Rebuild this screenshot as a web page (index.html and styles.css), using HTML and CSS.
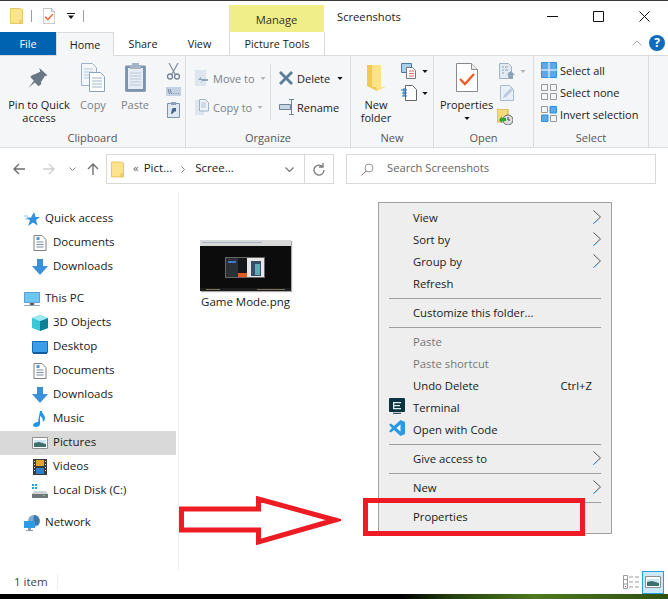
FILE: index.html
```html
<!DOCTYPE html>
<html lang="en">
<head>
<meta charset="utf-8">
<title>Screenshots</title>
<link rel="stylesheet" href="styles.css">
</head>
<body>
<svg class="defs" width="0" height="0">
  <defs>
    <symbol id="folder" viewBox="0 0 14 17"><path d="M.5.5h10l3 1v15H.5z" fill="#fde48c" stroke="#e3c35f"/><path d="M10.5 13h3v3.500h-3z" fill="#f3cf6a" stroke="#e3c35f" stroke-width=".6"/></symbol>
    <symbol id="propdoc" viewBox="0 0 22 29"><path d="M.5.500h15l6 6v22H.5z" fill="#fff" stroke="#8a8a8a"/><path d="M15.500.5v6h6" fill="#eee" stroke="#8a8a8a"/><path d="M4 16l5 5 9-10" fill="none" stroke="#ef5a24" stroke-width="2.400"/></symbol>
    <symbol id="docs" viewBox="0 0 13 16"><path d="M.5.500h8l4 4v11H.5z" fill="#fff" stroke="#7f7f7f"/><path d="M3 7h7M3 9.500h7M3 12h7" stroke="#6f8ba6"/><path d="M3 2h3v3H3z" fill="#5d93c5"/></symbol>
    <symbol id="down" viewBox="0 0 16 16"><path d="M5 0h6v7h5l-8 9-8-9h5z" fill="#3c8fdc"/></symbol>
    <symbol id="chev" viewBox="0 0 8 14"><path d="M.5.500L7.500 7 .5 13.500" fill="none" stroke="#555" stroke-width="1"/><path d="M4 10.300L.5 13.500" fill="none" stroke="#2f8fe0" stroke-width="1"/></symbol>
    <symbol id="tri" viewBox="0 0 7 4"><path d="M0 0h7L3.500 4z"/></symbol>
    <symbol id="pic" viewBox="0 0 16 12"><path d="M.5.5h15v11H.5z" fill="#fff" stroke="#8f8f8f"/><path d="M2 3h12v3H2z" fill="#cfe6f3"/><path d="M2 6l5-1 7 2v3H2z" fill="#3e6d6d"/></symbol>
  </defs>
</svg>
<div class="window">
  <div class="topstrip"></div>
  <header class="titlebar">
    <div class="qat">
      <svg class="i-qfolder"><use href="#folder"/></svg>
      <span class="qsep"></span>
      <svg class="i-qdoc"><use href="#propdoc"/></svg>
      <svg class="i-qdrop" viewBox="0 0 8 6"><path d="M0 0h8v1H0zM1 2.500h6L4 6z" fill="#111"/></svg>
      <span class="qsep"></span>
    </div>
    <div class="manage">Manage</div>
    <div class="wintitle">Screenshots</div>
    <div class="winctl">
      <svg class="wc" viewBox="0 0 11 11"><path d="M0 5.500h11" stroke="#111"/></svg>
      <svg class="wc" viewBox="0 0 11 11"><path d="M.5.500h10v10H.5z" fill="none" stroke="#111"/></svg>
      <svg class="wc" viewBox="0 0 11 11"><path d="M.5.500l10 10M10.500.5l-10 10" stroke="#111"/></svg>
    </div>
  </header>
  <nav class="tabs">
    <div class="tab tab-file">File</div>
    <div class="tab tab-home">Home</div>
    <div class="tab tab-share">Share</div>
    <div class="tab tab-view">View</div>
    <div class="tab tab-tools">Picture Tools</div>
    <div class="tabs-right">
      <svg class="collapse" viewBox="0 0 10 6"><path d="M.5 5.500L5 1l4.500 4.500" fill="none" stroke="#aaa"/></svg>
      <div class="help">?</div>
    </div>
  </nav>
  <section class="ribbon">
    <div class="group g-clip">
      <div class="gbody">
        <div class="rbtn b-pin">
          <div class="ricon"><svg class="i-pin" viewBox="0 0 22 22"><path d="M13 0l9 8-3 1-4 6 0 3-3 2-4-4-7 6 6-8-4-4 2-2 3-1 6-3z" fill="#6a7885"/></svg></div>
          <span>Pin to Quick<br>access</span>
        </div>
        <div class="rbtn b-copy dim">
          <div class="ricon"><svg class="i-copy" viewBox="0 0 24 29"><path d="M.5.500h11l4 4v18H.5z" fill="#f4f7fa" stroke="#9fb2c5"/><path d="M3 6h9M3 9h9M3 12h9M3 15h9" stroke="#b8c8d8"/><path d="M8.500 9.500h11l4 4v15h-15z" fill="#fff" stroke="#8ba4bc"/><path d="M11 15h10M11 18h10M11 21h10M11 24h10" stroke="#9db4ca"/></svg></div>
          <span>Copy</span>
        </div>
        <div class="rbtn b-paste dim">
          <div class="ricon"><svg class="i-paste" viewBox="0 0 21 29"><path d="M.7 3h19.600v25.300H.7z" fill="#7c93ad" stroke="#7c93ad"/><path d="M3 5h15v21H3z" fill="#e6ecf3"/><path d="M5 10h11M5 13h11M5 16h11M5 19h11M5 22h11" stroke="#b9c9db"/><path d="M7 0h7v2h2v4H5V2h2z" fill="#a5b4c4"/></svg></div>
          <span>Paste</span>
        </div>
        <div class="rsmallcol">
          <svg class="i-cut" viewBox="0 0 13 17"><path d="M2 0l6 11M11 0L5 11" stroke="#8695a4" stroke-width="1.300"/><circle cx="3" cy="13.500" r="2.500" fill="none" stroke="#6d8299" stroke-width="1.300"/><circle cx="10" cy="13.500" r="2.500" fill="none" stroke="#6d8299" stroke-width="1.300"/></svg>
          <svg class="i-path" viewBox="0 0 15 9"><path d="M0 0h15v9H0z" fill="#c4d3e4"/><path d="M2 2l1.500 5M4 2l1.500 5M7 6.500h1M9.500 6.500h1M12 6.500h1" stroke="#567" stroke-width=".7"/></svg>
          <svg class="i-shortcut" viewBox="0 0 13 16"><path d="M.5 1.500h12v14H.5z" fill="#dfe7f0" stroke="#7c93ad"/><path d="M4 0h5v3H4z" fill="#8ea2b7"/><path d="M4 12l1-5h1l-1-1h4v4L8 9l-3 3z" fill="#46678a"/></svg>
        </div>
      </div>
      <div class="glabel">Clipboard</div>
    </div>
    <div class="group g-org">
      <div class="gbody">
        <div class="orgcol oc-a">
          <div class="orow dim"><svg class="i-small" viewBox="0 0 14 16"><path d="M0 0h11v16H0z" fill="#dde6ef"/><path d="M7 10l-4 0 3-3v2h7v2H6v2z" fill="#8ca3b9"/></svg><span>Move to</span><svg class="i-tri dimtri"><use href="#tri"/></svg></div>
          <div class="orow dim"><svg class="i-small" viewBox="0 0 14 16"><path d="M0 1h9v15H0z" fill="#dde6ef"/><path d="M4.500.5h6l3 3V12h-9z" fill="#eef2f6" stroke="#9fb2c5"/><path d="M6 4h5M6 6h5M6 8h5" stroke="#b1c2d3"/></svg><span>Copy to</span><svg class="i-tri dimtri"><use href="#tri"/></svg></div>
        </div>
        <div class="orgcol oc-b">
          <div class="orow"><svg class="i-del" viewBox="0 0 14 14"><path d="M2 0l5 5 5-5 2 2-5 5 5 5-2 2-5-5-5 5-2-2 5-5-5-5z" fill="#5c7c9b"/></svg><span>Delete</span><svg class="i-tri"><use href="#tri"/></svg></div>
          <div class="orow"><svg class="i-ren" viewBox="0 0 16 16"><path d="M.5 5.500h11v5H.5z" fill="#c8d5e3" stroke="#6d8299"/><path d="M10 .5h5M10 15.500h5M12.500.5v15" stroke="#6d8299"/></svg><span>Rename</span></div>
        </div>
      </div>
      <div class="glabel">Organize</div>
    </div>
    <div class="group g-new">
      <div class="gbody">
        <div class="rbtn b-newf">
          <div class="ricon"><svg class="i-newf" viewBox="0 0 19 28"><path d="M0 1h10v26L0 22z" fill="#f3c952"/><path d="M5 1h9v22h5l-9 4-1-4H5z" fill="#fde18b"/></svg></div>
          <span>New<br>folder</span>
        </div>
        <div class="newcol">
          <div class="nrow"><svg class="i-sm2" viewBox="0 0 16 16"><path d="M.5.5h10v9H.5z" fill="#a8d0ea" stroke="#4c7ca3"/><path d="M5.500 4.500h6l3 3v8h-9z" fill="#fff" stroke="#777"/><path d="M8 8h5M8 10.500h5M8 13h5" stroke="#d86060"/></svg><svg class="i-tri"><use href="#tri"/></svg></div>
          <div class="nrow"><svg class="i-sm2" viewBox="0 0 16 16"><path d="M4.500.5h7l4 4v11h-11z" fill="#fff" stroke="#666"/><path d="M0 5h6M1 8h5M1 11h5M3 3v8" stroke="#1d6fc0"/></svg><svg class="i-tri"><use href="#tri"/></svg></div>
        </div>
      </div>
      <div class="glabel">New</div>
    </div>
    <div class="group g-open">
      <div class="gbody">
        <div class="rbtn b-prop">
          <div class="ricon"><svg class="i-prop"><use href="#propdoc"/></svg></div>
          <span>Properties</span>
          <svg class="i-tri tri-under"><use href="#tri"/></svg>
        </div>
        <div class="opencol">
          <div class="nrow"><svg class="i-sm2" viewBox="0 0 16 16"><path d="M.5.5h9l3 3v6h-3v6h-9z" fill="#e2eaf2" stroke="#9fb2c5"/><path d="M3 4h2M6 4h3M3 7h2M6 7h3M3 10h2" stroke="#8ca3b9"/><path d="M12 8l4 4h-2v4h-4v-4H8z" fill="#8ca3b9"/></svg><svg class="i-tri dimtri"><use href="#tri"/></svg></div>
          <div class="nrow"><svg class="i-sm2 tall" viewBox="0 0 14 16"><path d="M.5.500h9l4 4v11H.5z" fill="#e8eff6" stroke="#a9bbcc"/><path d="M3 13l1-3 7-7 2 2-7 7z" fill="#b8cadb"/></svg></div>
          <div class="nrow"><svg class="i-hist" viewBox="0 0 16 16"><path d="M0 0h11v13H0z" fill="#f6d978" stroke="#cfae4b"/><circle cx="11" cy="11" r="5" fill="#ddd" stroke="#666"/><path d="M11 8v3h2" stroke="#444" fill="none"/><path d="M2 11l3-4v2h4v3H5v2z" fill="#2da33a"/></svg></div>
        </div>
      </div>
      <div class="glabel">Open</div>
    </div>
    <div class="group g-sel">
      <div class="gbody selcol">
        <div class="srow"><svg class="i-sel" viewBox="0 0 16 16"><path d="M.5.500h15v15H.5z" fill="#5ea8e6" stroke="#2f8fe0"/><path d="M8 0v16M0 8h16" stroke="#fff"/></svg><span>Select all</span></div>
        <div class="srow"><svg class="i-sel" viewBox="0 0 16 16"><path d="M.5.500h6v6h-6zM9.500.5h6v6h-6zM.5 9.500h6v6h-6zM9.500 9.500h6v6h-6z" fill="none" stroke="#999"/></svg><span>Select none</span></div>
        <div class="srow"><svg class="i-sel" viewBox="0 0 16 16"><path d="M.5.500h6v6h-6z" fill="none" stroke="#999"/><path d="M9 .5h6.500V7H9z" fill="#5ea8e6" stroke="#2f8fe0"/><path d="M.5 9h6.500v6.500H.5z" fill="#5ea8e6" stroke="#2f8fe0"/><path d="M9.500 9.500h6v6h-6z" fill="none" stroke="#999"/></svg><span>Invert selection</span></div>
      </div>
      <div class="glabel">Select</div>
    </div>
  </section>
  <section class="addr">
    <svg class="nav-ico n-back" viewBox="0 0 12 12"><path d="M6 1L1 6l5 5M1 6h11" fill="none" stroke="#6e6e6e" stroke-width="1.400"/></svg>
    <svg class="nav-ico n-fwd" viewBox="0 0 12 12"><path d="M6 1l5 5-5 5M11 6H0" fill="none" stroke="#d0d0d0" stroke-width="1.400"/></svg>
    <svg class="n-more" viewBox="0 0 7 4"><path d="M.5.500l3 3 3-3" fill="none" stroke="#8a8a8a"/></svg>
    <svg class="nav-ico n-up" viewBox="0 0 12 12"><path d="M1 6l5-5 5 5M6 1v11" fill="none" stroke="#6e6e6e" stroke-width="1.400"/></svg>
    <div class="pathbox">
      <svg class="i-pfolder"><use href="#folder"/></svg>
      <span class="crumb-m">«</span><span class="crumb">Pict...</span>
      <svg class="crumb-sep" viewBox="0 0 4 7"><path d="M.5.500l3 3-3 3" fill="none" stroke="#777"/></svg>
      <span class="crumb">Scree...</span>
      <svg class="path-drop" viewBox="0 0 9 5"><path d="M.5.500l4 4 4-4" fill="none" stroke="#777" stroke-width="1.200"/></svg>
      <div class="refresh"><svg viewBox="0 0 12 13"><path d="M9.500 3.500A5 5 0 1 0 11 7M10 0v4H6" fill="none" stroke="#777" stroke-width="1.300"/></svg></div>
    </div>
    <div class="searchbox">
      <svg class="i-search" viewBox="0 0 13 13"><circle cx="8" cy="5" r="4" fill="none" stroke="#999"/><path d="M5 8l-4.500 4.500" stroke="#a06a8a"/></svg>
      <span>Search Screenshots</span>
    </div>
  </section>
  <main class="main">
    <aside class="tree">
      <div class="row top"><svg class="ti" viewBox="0 0 16 16"><path d="M10 1l1.500 5H16l-4 3 1.500 5.500L9 11.500 4 15l2-5.500-4-3h5z" fill="#2f8fe0"/><path d="M0 5h4M1 8h3" stroke="#8cc4f2"/></svg><span>Quick access</span></div>
      <div class="row sub"><svg class="ti"><use href="#docs"/></svg><span>Documents</span></div>
      <div class="row sub"><svg class="ti"><use href="#down"/></svg><span>Downloads</span></div>
      <div class="row top gap"><svg class="ti" viewBox="0 0 16 16"><path d="M.5 1.500h15v10H.5z" fill="#6ec6f5" stroke="#5a9fd0"/><path d="M6 12h4v2H6zM0 14.500h16" stroke="#9aa7b2"/></svg><span>This PC</span></div>
      <div class="row sub"><svg class="ti" viewBox="0 0 16 16"><path d="M8 0l8 3v10l-8 3-8-3V3z" fill="#37c8d8"/><path d="M8 6l8-3v10l-8 3z" fill="#0f7f97"/><path d="M8 0l8 3-8 3-8-3z" fill="#9eeaf0"/></svg><span>3D Objects</span></div>
      <div class="row sub"><svg class="ti" viewBox="0 0 16 14"><path d="M.5 1.500h15v11H.5z" fill="#3a9ee8" stroke="#1171b8"/><path d="M1 12h14v2H1z" fill="#0f5e9e"/></svg><span>Desktop</span></div>
      <div class="row sub"><svg class="ti"><use href="#docs"/></svg><span>Documents</span></div>
      <div class="row sub"><svg class="ti"><use href="#down"/></svg><span>Downloads</span></div>
      <div class="row sub"><svg class="ti" viewBox="0 0 16 16"><path d="M8 0h2c0 3 3 4 3 7 0 2-1 3-2 4 0-3-1-5-3-6v8c0 2-2 3-4 3s-3-1-3-2 2-3 5-3z" fill="#2196e8"/></svg><span>Music</span></div>
      <div class="row sub active"><svg class="ti" viewBox="0 0 16 12"><use href="#pic"/></svg><span>Pictures</span></div>
      <div class="row sub"><svg class="ti" viewBox="0 0 14 16"><path d="M0 0h14v16H0z" fill="#3a3a3a"/><path d="M3 1h8v6H3z" fill="#e4a52c"/><path d="M3 9h8v6H3z" fill="#2f80c8"/><path d="M1 2h1v1H1zM1 5h1v1H1zM1 8h1v1H1zM1 11h1v1H1zM12 2h1v1h-1zM12 5h1v1h-1zM12 8h1v1h-1zM12 11h1v1h-1z" fill="#ddd"/></svg><span>Videos</span></div>
      <div class="row sub"><svg class="ti" viewBox="0 0 16 14"><path d="M0 0h2v2H0zM3 0h2v2H3zM0 3h2v2H0zM3 3h2v2H3z" fill="#1ea1e8"/><path d="M2 7h12l2 3v4H0v-4z" fill="#cfd3d6"/><path d="M0 10h16v4H0z" fill="#70757a"/><path d="M11 11h2v1h-2z" fill="#5fdc5f"/></svg><span>Local Disk (C:)</span></div>
      <div class="row top gap"><svg class="ti" viewBox="0 0 16 16"><circle cx="10" cy="6" r="6" fill="#7da9cf"/><path d="M10 0a6 6 0 0 1 4 10H9z" fill="#3f78ab"/><path d="M0 6h11v7H0z" fill="#2b9be6"/><path d="M4 13h3v2H4zM2 15h7v1H2z" fill="#8a9aa6"/></svg><span>Network</span></div>
    </aside>
    <div class="files">
      <figure class="file">
        <svg class="thumb" viewBox="0 0 91 51"><path d="M0 0h91v51H0z" fill="#0c0c0c"/><path d="M0 0h91v6H0z" fill="#d9d9d9"/><path d="M2 2h60v1H2z" fill="#a8b4c4"/><path d="M25 17h40v21H25z" fill="#666"/><path d="M26 18h12v19H26z" fill="#2c2f36"/><path d="M28 21h8v2h-8z" fill="#3f78c8"/><path d="M38 18h9v19h-9z" fill="#15171c"/><path d="M38 33h9v4h-9z" fill="#e35a1f"/><path d="M47 18h17v19H47z" fill="#e8e8e8"/><path d="M51 21h10v15H51z" fill="#374d68"/><path d="M55 24h5v11h-5z" fill="#5faab6"/><path d="M0 48h91v3H0z" fill="#1c1c1c"/><path d="M6 49h14v1H6zM57 49h28v1H57z" fill="#7b7355"/></svg>
        <figcaption>Game Mode.png</figcaption>
      </figure>
    </div>
  </main>
  <footer class="status">
    <span class="count">1 item</span>
    <span class="st-sep"></span>
    <div class="views">
      <svg class="i-details" viewBox="0 0 16 14"><path d="M.5.500h4v13h-4z" fill="none" stroke="#999"/><path d="M.5 4.500h4M.5 9h4M6 2h4M12 2h4M6 7h4M12 7h4M6 12h4M12 12h4" stroke="#999"/><path d="M2 11h1v1H2z" fill="#d33"/></svg>
      <div class="view-on"><svg class="i-large"><use href="#pic"/></svg></div>
    </div>
  </footer>
  <div class="desk"></div>
</div>

<div class="ctx">
  <div class="mi"><span>View</span><svg class="mchev"><use href="#chev"/></svg></div>
  <div class="mi"><span>Sort by</span><svg class="mchev"><use href="#chev"/></svg></div>
  <div class="mi"><span>Group by</span><svg class="mchev"><use href="#chev"/></svg></div>
  <div class="mi"><span>Refresh</span></div>
  <div class="msep"></div>
  <div class="mi"><span>Customize this folder...</span></div>
  <div class="msep"></div>
  <div class="mi off"><span>Paste</span></div>
  <div class="mi off"><span>Paste shortcut</span></div>
  <div class="mi"><span>Undo Delete</span><kbd>Ctrl+Z</kbd></div>
  <div class="mi"><svg class="mico" viewBox="0 0 16 16"><path d="M1 0h14a1 1 0 0 1 1 1v12a1 1 0 0 1-1 1H1a1 1 0 0 1-1-1V1a1 1 0 0 1 1-1z" fill="#0c3440"/><path d="M4 4h8v1.200H5.300V7h5.700v1.200H5.300V10H12v1.200H4z" fill="#dfeff2"/><path d="M4 15.300h8" stroke="#0c3440"/></svg><span>Terminal</span></div>
  <div class="mi"><svg class="mico" viewBox="0 0 16 16"><path d="M11.500 0L16 2v12l-4.500 2L5 10l-3 2.500L0 11.300 3 8 0 4.700 2 3.500 5 6z" fill="#2a9ae4"/><path d="M11.500 4.500L7.500 8l4 3.500z" fill="#fff"/></svg><span>Open with Code</span></div>
  <div class="msep"></div>
  <div class="mi"><span>Give access to</span><svg class="mchev"><use href="#chev"/></svg></div>
  <div class="msep"></div>
  <div class="mi"><span>New</span><svg class="mchev"><use href="#chev"/></svg></div>
  <div class="msep"></div>
  <div class="mi"><span>Properties</span></div>
</div>
<svg class="arrow" viewBox="0 0 162 50"><path d="M2.500 13H79.500V3L156 24 79.500 46V34H2.500z" fill="none" stroke="#ed1c24" stroke-width="5"/></svg>
<div class="redbox"></div>
</body>
</html>
```
FILE: styles.css
```css
* { box-sizing: border-box; }
html, body { margin: 0; padding: 0; }
body {
  width: 668px;
  height: 599px;
  overflow: hidden;
  position: relative;
  background: #fff;
  font-family: "Open Sans", "Noto Sans", sans-serif;
  font-size: 11.5px;
  color: #1a1a1a;
}
svg { display: block; flex: none; }
.defs { position: absolute; }
.window { display: flex; flex-direction: column; width: 668px; height: 599px; }
.topstrip { height: 1px; background: #3b3838; }

.titlebar { display: flex; height: 31px; align-items: stretch; }
.qat { display: flex; align-items: center; width: 229px; padding: 0 0 2px 10px; }
.i-qfolder { width: 13px; height: 16px; }
.qsep { width: 1px; height: 12px; background: #a0a0a0; margin: 0 11px 0 8px; }
.i-qdoc { width: 12px; height: 16px; margin-right: 12px; }
.i-qdrop { width: 8px; height: 6px; margin-right: 8px; }
.qat .qsep:last-child { margin-left: 0; }
.manage { width: 95px; margin-top: 4px; background: #f0ee88; text-align: center; line-height: 29px; font-size: 11.2px; color: #333; }
.wintitle { margin-left: 13px; line-height: 32px; font-size: 11.2px; }
.winctl { display: flex; margin-left: auto; padding: 10px 18px 0 0; gap: 35px; }
.wc { width: 11px; height: 11px; }

.tabs { display: flex; height: 24px; align-items: stretch; border-bottom: 1px solid #dadbdc; }
.tab { text-align: center; line-height: 24px; font-size: 10.8px; }
.tab-file { width: 56px; background: #0063b1; color: #fff; }
.tab-home { width: 58px; background: #f5f6f7; border: 1px solid #dadbdc; border-bottom: 0; height: 24px; line-height: 23px; }
.tab-share { width: 58px; }
.tab-view { width: 55px; }
.tab-tools { width: 96px; margin-left: 2px; border: solid #dadbdc; border-width: 0 1px; }
.tabs-right { display: flex; align-items: center; margin-left: auto; padding: 0 3px 2px 0; gap: 7px; }
.collapse { width: 10px; height: 6px; }
.help { width: 16px; height: 16px; border-radius: 50%; background: #0f6cbd; color: #fff; font-weight: 700; font-size: 12px; line-height: 16px; text-align: center; }

.ribbon { display: flex; height: 92px; background: #f5f6f7; border-bottom: 1px solid #dadbdc; font-size: 11px; }
.group { display: flex; flex-direction: column; height: 91px; }
.gbody { flex: 1; display: flex; padding-top: 4px; min-height: 0; }
.glabel { height: 18px; line-height: 17px; text-align: center; color: #555; }
.g-clip, .g-org, .g-new, .g-open, .g-sel { border-right: 1px solid #dadbdc; }
.g-clip { width: 186px; }
.g-org { width: 165px; }
.g-new { width: 83px; }
.g-open { width: 100px; }
.g-sel { width: 115px; }
.rbtn { display: flex; flex-direction: column; align-items: center; text-align: center; line-height: 13px; }
.ricon { height: 38px; display: flex; align-items: center; justify-content: center; padding-bottom: 3px; }
.dim, .dim span { color: #7b8188; }
.b-pin { width: 78px; }
.b-pin .ricon { padding-right: 4px; }
.b-copy { width: 30px; }
.b-paste { width: 54px; }
.i-pin { width: 21px; height: 20px; }
.i-copy { width: 24px; height: 29px; }
.i-paste { width: 21px; height: 29px; }
.rsmallcol { display: flex; flex-direction: column; align-items: center; width: 23px; padding-top: 3px; }
.i-cut { width: 13px; height: 17px; }
.i-path { width: 15px; height: 9px; margin: 7px 0 6px; }
.i-shortcut { width: 13px; height: 16px; }

.g-org .gbody { padding: 8px 0 0 9px; }
.orgcol { display: flex; flex-direction: column; gap: 7px; padding-top: 3px; height: 56px; }
.oc-a { width: 76px; border-right: 1px solid #dadbdc; margin-right: 8px; }
.orow { display: flex; align-items: center; height: 22px; gap: 4px; white-space: nowrap; }
.i-small { width: 14px; height: 16px; }
.i-del { width: 14px; height: 14px; }
.i-ren { width: 16px; height: 16px; margin-right: -2px; }
.i-tri { width: 6px; height: 3px; fill: #111; }
.dimtri { fill: #b5b5b5; }
.oc-a .i-tri { margin-left: 1px; }
.oc-b .i-tri { margin-left: 3px; }

.b-newf { width: 50px; }
.i-newf { width: 19px; height: 28px; }
.newcol { display: flex; flex-direction: column; gap: 6px; padding-top: 3px; }
.nrow { display: flex; align-items: center; height: 16px; gap: 5px; }
.i-sm2 { width: 16px; height: 16px; }
.b-prop { width: 65px; }
.i-prop { width: 22px; height: 29px; }
.tri-under { margin-top: 6px; }
.opencol { display: flex; flex-direction: column; padding-top: 3px; gap: 6px; }
.opencol .nrow:last-child { margin-top: 2px; }
.i-hist { width: 16px; height: 16px; margin-left: -2px; }
.g-sel .selcol { flex-direction: column; padding: 6px 0 0 7px; gap: 6px; }
.srow { display: flex; align-items: center; height: 16px; gap: 3px; white-space: nowrap; }
.i-sel { width: 16px; height: 16px; }

.addr { display: flex; align-items: flex-start; height: 43px; padding: 6px 0 0 0; }
.nav-ico { width: 12px; height: 12px; margin-top: 9px; }
.n-back { margin-left: 13px; }
.n-fwd { margin-left: 18px; }
.n-more { width: 7px; height: 4px; margin: 13px 0 0 14px; }
.n-up { margin-left: 11px; }
.pathbox { display: flex; align-items: center; width: 228px; height: 30px; margin-left: 7px; border: 1px solid #d9d9d9; padding-left: 4px; }
.i-pfolder { width: 13px; height: 17px; margin-right: 9px; }
.crumb-m { color: #666; margin-right: 5px; margin-bottom: 4px; }
.crumb { margin-bottom: 4px; }
.crumb-sep { width: 4px; height: 7px; margin: 0 10px 0 9px; }
.path-drop { width: 9px; height: 5px; margin-left: auto; margin-right: 10px; }
.refresh { width: 29px; height: 28px; border-left: 1px solid #d9d9d9; display: flex; align-items: center; justify-content: center; }
.refresh svg { width: 12px; height: 13px; }
.searchbox { display: flex; align-items: center; width: 310px; height: 30px; margin-left: 12px; border: 1px solid #d9d9d9; padding-left: 14px; color: #666; font-size: 11.2px; }
.searchbox span { margin-bottom: 4px; }
.i-search { width: 13px; height: 13px; margin-right: 13px; }

.main { flex: 1; display: flex; min-height: 0; }
.tree { width: 179px; padding: 16px 2px 0 0; border-right: 1px solid #f0f0f0; }
.row { display: flex; align-items: center; height: 24px; white-space: nowrap; }
.row .ti { width: 16px; height: 16px; margin-right: 5px; }
.row span { margin-bottom: 4px; }
.row.top { padding-left: 24px; }
.row.sub { padding-left: 32px; }
.row.gap { margin-top: 8px; }
.row.active { background: #d9d9d9; }
.files { flex: 1; padding: 49px 0 0 21px; }
.file { margin: 0; width: 91px; display: flex; flex-direction: column; align-items: center; }
.thumb { width: 91px; height: 51px; box-shadow: 1px 1px 1px #aaa; }
.file figcaption { margin-top: 4px; white-space: nowrap; line-height: 14px; }

.status { display: flex; align-items: center; height: 24px; padding-left: 14px; }
.count { width: 43px; color: #444; margin-bottom: 2px; }
.st-sep { width: 1px; height: 16px; background: #ededed; }
.views { display: flex; align-items: center; margin-left: auto; padding-right: 4px; gap: 3px; }
.i-details { width: 16px; height: 14px; }
.view-on { width: 22px; height: 23px; background: #cce8ff; border: 1px solid #26a0da; display: flex; align-items: center; justify-content: center; }
.i-large { width: 16px; height: 12px; }
.desk { height: 5px; background: linear-gradient(90deg, #000 0, #000 60%, #25420f 68%, #4c7a1c 80%, #2f5012 100%); }

.ctx { position: absolute; left: 378px; top: 202px; width: 234px; height: 332px; background: #eee; border: 1px solid #a0a0a0; padding: 3px 10px 0; font-size: 11.3px; }
.mi { display: flex; align-items: center; height: 22px; padding-left: 24px; position: relative; white-space: nowrap; }
.mi.off span { color: #767676; }
.mi kbd { font: inherit; margin-left: auto; margin-right: 9px; }
.msep { height: 1px; background: #a0a0a0; margin: 4px 0 2px; }
.mchev { width: 8px; height: 14px; margin-left: auto; }
.mico { position: absolute; left: 0; top: 2px; width: 16px; height: 16px; }
.arrow { position: absolute; left: 179px; top: 496px; width: 162px; height: 50px; }
.redbox { position: absolute; left: 363px; top: 498px; width: 222px; height: 38px; border: 5px solid #ed1c24; }
```
